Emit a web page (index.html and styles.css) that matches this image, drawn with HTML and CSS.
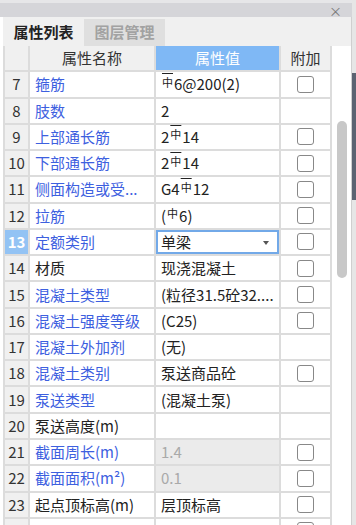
FILE: index.html
```
<!DOCTYPE html>
<html lang="zh-CN">
<head>
    <meta charset="UTF-8">
    <meta name="viewport" content="width=device-width, initial-scale=1.0">
    <title>属性列表</title>
    <link rel="stylesheet" href="styles.css">
</head>
<body>
<div class="panel">
    <div class="titlebar"><span class="close">×</span></div>
    <div class="content">
        <div class="tabs">
            <div class="tab active">属性列表</div>
            <div class="tab">图层管理</div>
        </div>
        <div class="gridwrap">
            <div class="grid">
                <div class="row head">
                    <div class="num"></div>
                    <div class="name">属性名称</div>
                    <div class="val">属性值</div>
                    <div class="add">附加</div>
                </div>

                <div class="row">
                    <div class="num">7</div>
                    <div class="name blue">箍筋</div>
                    <div class="val"><span class="bar top">中</span>6@200(2)</div>
                    <div class="add"><span class="box"></span></div>
                </div>
                <div class="row">
                    <div class="num">8</div>
                    <div class="name blue">肢数</div>
                    <div class="val">2</div>
                    <div class="add"></div>
                </div>
                <div class="row">
                    <div class="num">9</div>
                    <div class="name blue">上部通长筋</div>
                    <div class="val">2<span class="bar top">中</span>14</div>
                    <div class="add"><span class="box"></span></div>
                </div>
                <div class="row">
                    <div class="num">10</div>
                    <div class="name blue">下部通长筋</div>
                    <div class="val">2<span class="bar top">中</span>14</div>
                    <div class="add"><span class="box"></span></div>
                </div>
                <div class="row">
                    <div class="num">11</div>
                    <div class="name blue">侧面构造或受...</div>
                    <div class="val">G4<span class="bar top">中</span>12</div>
                    <div class="add"><span class="box"></span></div>
                </div>
                <div class="row">
                    <div class="num">12</div>
                    <div class="name blue">拉筋</div>
                    <div class="val">(<span class="bar">中</span>6)</div>
                    <div class="add"><span class="box"></span></div>
                </div>
                <div class="row">
                    <div class="num current">13</div>
                    <div class="name blue">定额类别</div>
                    <div class="val select">单梁</div>
                    <div class="add"><span class="box"></span></div>
                </div>
                <div class="row">
                    <div class="num">14</div>
                    <div class="name">材质</div>
                    <div class="val">现浇混凝土</div>
                    <div class="add"><span class="box"></span></div>
                </div>
                <div class="row">
                    <div class="num">15</div>
                    <div class="name blue">混凝土类型</div>
                    <div class="val">(粒径31.5砼32....</div>
                    <div class="add"><span class="box"></span></div>
                </div>
                <div class="row">
                    <div class="num">16</div>
                    <div class="name blue">混凝土强度等级</div>
                    <div class="val">(C25)</div>
                    <div class="add"><span class="box"></span></div>
                </div>
                <div class="row">
                    <div class="num">17</div>
                    <div class="name blue">混凝土外加剂</div>
                    <div class="val">(无)</div>
                    <div class="add"></div>
                </div>
                <div class="row">
                    <div class="num">18</div>
                    <div class="name blue">混凝土类别</div>
                    <div class="val">泵送商品砼</div>
                    <div class="add"><span class="box"></span></div>
                </div>
                <div class="row">
                    <div class="num">19</div>
                    <div class="name blue">泵送类型</div>
                    <div class="val">(混凝土泵)</div>
                    <div class="add"></div>
                </div>
                <div class="row">
                    <div class="num">20</div>
                    <div class="name">泵送高度(m)</div>
                    <div class="val"></div>
                    <div class="add"></div>
                </div>
                <div class="row">
                    <div class="num">21</div>
                    <div class="name blue">截面周长(m)</div>
                    <div class="val locked">1.4</div>
                    <div class="add"><span class="box"></span></div>
                </div>
                <div class="row">
                    <div class="num">22</div>
                    <div class="name blue">截面面积(m²)</div>
                    <div class="val locked">0.1</div>
                    <div class="add"><span class="box"></span></div>
                </div>
                <div class="row">
                    <div class="num">23</div>
                    <div class="name">起点顶标高(m)</div>
                    <div class="val">层顶标高</div>
                    <div class="add"><span class="box"></span></div>
                </div>
                <div class="row">
                    <div class="num"></div>
                    <div class="name"></div>
                    <div class="val"></div>
                    <div class="add"><span class="box"></span></div>
                </div>
            </div>
            <div class="scroll"><div class="thumb"></div></div>
        </div>
    </div>
</div>
<div class="side"><div class="side-dark"></div></div>
</body>
</html>
```

FILE: styles.css
```
html, body {
    height: 525px;
    overflow: hidden;
}
body {
    margin: 0;
    display: flex;
    background: #ffffff;
    font-family: "Noto Sans CJK SC", "Noto Sans", sans-serif;
    font-size: 15px;
    color: #222;
}
.panel {
    width: 352px;
    display: flex;
    flex-direction: column;
}
.side {
    width: 4px;
    background: #e6e6e6;
}
.side-dark {
    margin-top: 73px;
    height: 127px;
    background: #5b6371;
}

/* title bar */
.titlebar {
    height: 14px;
    border-top: 3px solid #e6e6e8;
    background: #d5d5d9;
    display: flex;
    justify-content: flex-end;
    align-items: center;
}
.close {
    font-size: 13px;
    line-height: 14px;
    color: #777;
    margin-right: 10px;
    margin-top: 2px;
}

.content {
    padding-left: 3px;
    flex: 1;
}

/* tabs */
.tabs {
    height: 29px;
    background: #f0f0f0;
    display: flex;
    align-items: flex-end;
    border-right: 1px solid #cfcfcf;
}
.tab {
    width: 81px;
    height: 27px;
    line-height: 26px;
    text-align: center;
    font-weight: bold;
    color: #a2a2a2;
    background: #dfdfdf;
}
.tab.active {
    color: #222;
    background: #f0f0f0;
}

/* grid */
.gridwrap {
    display: flex;
}
.grid {
    width: 329px;
    border-left: 2px solid #dcdcdc;
    box-sizing: border-box;
}
.row {
    display: grid;
    grid-template-columns: 25px 126px 125px 51px;
    height: 26.27px;
}
.row > div {
    border-right: 2px solid #dcdcdc;
    border-bottom: 2px solid #dcdcdc;
    box-sizing: border-box;
    white-space: nowrap;
    overflow: hidden;
    display: flex;
    align-items: center;
    line-height: 20px;
}
.num {
    background: #f0f0f0;
    justify-content: center;
    color: #333;
}
.num.current {
    background: #93c3f4;
    color: #fff;
    font-weight: bold;
}
.name {
    padding-left: 5px;
}
.name.blue {
    color: #3d60df;
}
.val {
    padding-left: 5px;
    position: relative;
}
.val.locked {
    background: #ebebeb;
    color: #a9a9a9;
}
.val.select {
    box-shadow: inset 0 0 0 2px #72a9e8;
}
.val.select::after {
    content: "";
    position: absolute;
    right: 10px;
    top: 11px;
    border-left: 3px solid transparent;
    border-right: 3px solid transparent;
    border-top: 4px solid #555;
}
.add {
    justify-content: center;
}
.box {
    width: 17px;
    height: 17px;
    border: 1px solid #888;
    border-radius: 3px;
    box-sizing: border-box;
    background: #fff;
}

.head > div {
    background: #f0f0f0;
    justify-content: center;
    padding-left: 0;
    color: #333;
}
.head .val {
    background: #7fb8f5;
    color: #fff;
}

/* rebar grade symbol */
.bar {
    font-size: 11px;
    line-height: 11px;
    position: relative;
    top: -2px;
    margin: 0 1px;
}
.bar.top {
    text-decoration: overline;
}

/* scroll bar */
.scroll {
    width: 19px;
    border-right: 1px solid #cfcfcf;
    background: #fff;
}
.thumb {
    margin: 75px 0 0 5px;
    width: 10px;
    height: 157px;
    border-radius: 5px;
    background: #c8c8c8;
}
```
